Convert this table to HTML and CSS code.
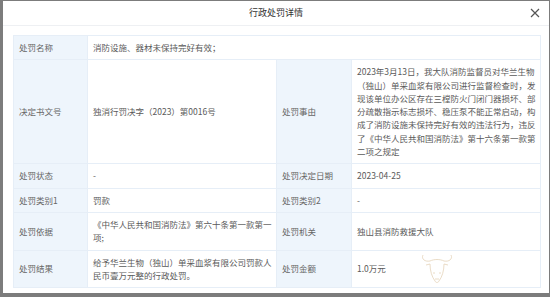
FILE: index.html
```html
<!DOCTYPE html>
<html lang="zh">
<head>
<meta charset="utf-8">
<link rel="stylesheet" href="styles.css">
</head>
<body>
<div class="modal">
  <div class="header">
    <span class="title">行政处罚详情</span>
    <svg class="close" width="10" height="10" viewBox="0 0 10 10"><path d="M1 1L9 9M9 1L1 9" stroke="#555" stroke-width="1.2" fill="none"/></svg>
  </div>
  <div class="body">
    <table class="info">
      <colgroup><col class="c-l"><col class="c-v"><col class="c-l2"><col class="c-v"></colgroup>
      <tr class="r1"><td class="lab">处罚名称</td><td class="val" colspan="3">消防设施、器材未保持完好有效；</td></tr>
      <tr><td class="lab">决定书文号</td><td class="val">独消行罚决字（2023）第0016号</td><td class="lab">处罚事由</td><td class="val">2023年3月13日，我大队消防监督员对华兰生物（独山）单采血浆有限公司进行监督检查时，发现该单位办公区存在三樘防火门闭门器损坏、部分疏散指示标志损坏、稳压泵不能正常启动，构成了消防设施未保持完好有效的违法行为，违反了《中华人民共和国消防法》第十六条第一款第二项之规定</td></tr>
      <tr><td class="lab">处罚状态</td><td class="val">-</td><td class="lab">处罚决定日期</td><td class="val">2023-04-25</td></tr>
      <tr class="r4"><td class="lab">处罚类别1</td><td class="val">罚款</td><td class="lab">处罚类别2</td><td class="val">-</td></tr>
      <tr><td class="lab">处罚依据</td><td class="val">《中华人民共和国消防法》第六十条第一款第一项;</td><td class="lab">处罚机关</td><td class="val">独山县消防救援大队</td></tr>
      <tr><td class="lab">处罚结果</td><td class="val">给予华兰生物（独山）单采血浆有限公司罚款人民币壹万元整的行政处罚。</td><td class="lab">处罚金额</td><td class="val">1.0万元</td></tr>
    </table>
    <svg class="mark" width="40" height="40" viewBox="0 0 40 40"><path d="M6 6C4 10 8 13 13 12M34 6C36 10 32 13 27 12M13 12C17 10 23 10 27 12M9 16L13 15M31 16L27 15M13 15C13 22 15 28 18 32C19 34 21 34 22 32C25 28 27 22 27 15M16 24H18M22 24H24M18 30H22" stroke="#e0c9a8" stroke-width="0.8" fill="none"/></svg>
  </div>
</div>
</body>
</html>
```
FILE: styles.css
```css
html, body {
  margin: 0;
  padding: 0;
}
body {
  background: #7c7c7c;
  width: 550px;
  height: 297px;
  overflow: hidden;
  font-family: "Noto Sans CJK SC", "Noto Sans", sans-serif;
}
.modal {
  margin: 1px 1px 0 3px;
  width: 546px;
  height: 292px;
  background: #fff;
  position: relative;
}
.header {
  height: 24px;
  border-bottom: 1px solid #eef0f3;
  display: flex;
  align-items: center;
  justify-content: center;
  position: relative;
}
.title {
  font-size: 9px;
  color: #333;
  line-height: 12px;
}
.close {
  position: absolute;
  right: 9px;
  top: 7px;
}
.body {
  padding: 9px 9px 0 10px;
  position: relative;
}
.info {
  width: 527px;
  border-collapse: collapse;
  table-layout: fixed;
  font-size: 8.5px;
  line-height: 13.3px;
}
.c-l { width: 74px; }
.c-l2 { width: 75px; }
.c-v { width: 189px; }
.info td {
  border: 1px solid #e6eef7;
  padding: 5px 4px 5px 5px;
  vertical-align: middle;
}
.info .r1 td { padding-top: 5px; padding-bottom: 5px; }
.lab {
  background: #eef5fc;
  color: #666;
}
.val {
  color: #5a5a5a;
  word-break: break-all;
}
.mark {
  position: absolute;
  left: 414px;
  top: 223px;
  opacity: 0.8;
}
```
